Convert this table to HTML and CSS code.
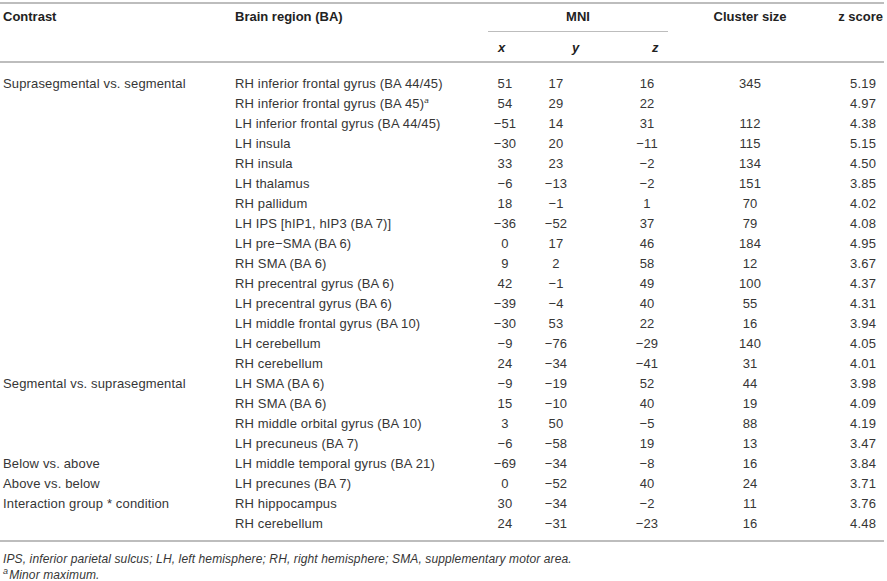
FILE: index.html
```html
<!DOCTYPE html>
<html>
<head>
<meta charset="utf-8">
<link rel="stylesheet" href="styles.css">
</head>
<body>
<div class="wrap">
<table class="tbl">
<colgroup>
<col class="c-con"><col class="c-reg"><col class="c-x"><col class="c-y"><col class="c-z"><col class="c-cl"><col class="c-zs">
</colgroup>
<thead>
<tr class="h1">
<th rowspan="2" class="con">Contrast</th>
<th rowspan="2" class="reg">Brain region (BA)</th>
<th colspan="3" class="mni"><div class="mni-in">MNI</div></th>
<th rowspan="2" class="cl">Cluster size</th>
<th rowspan="2" class="zs">z score</th>
</tr>
<tr class="h2">
<th class="hx">x</th>
<th class="hy">y</th>
<th class="hz">z</th>
</tr>
</thead>
<tbody>
<tr><td class="con">Suprasegmental vs. segmental</td><td class="reg">RH inferior frontal gyrus (BA 44/45)</td><td class="n">51</td><td class="n">17</td><td class="n z">16</td><td class="n">345</td><td class="zs">5.19</td></tr>
<tr><td class="con"></td><td class="reg">RH inferior frontal gyrus (BA 45)<sup>a</sup></td><td class="n">54</td><td class="n">29</td><td class="n z">22</td><td class="n"></td><td class="zs">4.97</td></tr>
<tr><td class="con"></td><td class="reg">LH inferior frontal gyrus (BA 44/45)</td><td class="n">−51</td><td class="n">14</td><td class="n z">31</td><td class="n">112</td><td class="zs">4.38</td></tr>
<tr><td class="con"></td><td class="reg">LH insula</td><td class="n">−30</td><td class="n">20</td><td class="n z">−11</td><td class="n">115</td><td class="zs">5.15</td></tr>
<tr><td class="con"></td><td class="reg">RH insula</td><td class="n">33</td><td class="n">23</td><td class="n z">−2</td><td class="n">134</td><td class="zs">4.50</td></tr>
<tr><td class="con"></td><td class="reg">LH thalamus</td><td class="n">−6</td><td class="n">−13</td><td class="n z">−2</td><td class="n">151</td><td class="zs">3.85</td></tr>
<tr><td class="con"></td><td class="reg">RH pallidum</td><td class="n">18</td><td class="n">−1</td><td class="n z">1</td><td class="n">70</td><td class="zs">4.02</td></tr>
<tr><td class="con"></td><td class="reg">LH IPS [hIP1, hIP3 (BA 7)]</td><td class="n">−36</td><td class="n">−52</td><td class="n z">37</td><td class="n">79</td><td class="zs">4.08</td></tr>
<tr><td class="con"></td><td class="reg">LH pre−SMA (BA 6)</td><td class="n">0</td><td class="n">17</td><td class="n z">46</td><td class="n">184</td><td class="zs">4.95</td></tr>
<tr><td class="con"></td><td class="reg">RH SMA (BA 6)</td><td class="n">9</td><td class="n">2</td><td class="n z">58</td><td class="n">12</td><td class="zs">3.67</td></tr>
<tr><td class="con"></td><td class="reg">RH precentral gyrus (BA 6)</td><td class="n">42</td><td class="n">−1</td><td class="n z">49</td><td class="n">100</td><td class="zs">4.37</td></tr>
<tr><td class="con"></td><td class="reg">LH precentral gyrus (BA 6)</td><td class="n">−39</td><td class="n">−4</td><td class="n z">40</td><td class="n">55</td><td class="zs">4.31</td></tr>
<tr><td class="con"></td><td class="reg">LH middle frontal gyrus (BA 10)</td><td class="n">−30</td><td class="n">53</td><td class="n z">22</td><td class="n">16</td><td class="zs">3.94</td></tr>
<tr><td class="con"></td><td class="reg">LH cerebellum</td><td class="n">−9</td><td class="n">−76</td><td class="n z">−29</td><td class="n">140</td><td class="zs">4.05</td></tr>
<tr><td class="con"></td><td class="reg">RH cerebellum</td><td class="n">24</td><td class="n">−34</td><td class="n z">−41</td><td class="n">31</td><td class="zs">4.01</td></tr>
<tr><td class="con">Segmental vs. suprasegmental</td><td class="reg">LH SMA (BA 6)</td><td class="n">−9</td><td class="n">−19</td><td class="n z">52</td><td class="n">44</td><td class="zs">3.98</td></tr>
<tr><td class="con"></td><td class="reg">RH SMA (BA 6)</td><td class="n">15</td><td class="n">−10</td><td class="n z">40</td><td class="n">19</td><td class="zs">4.09</td></tr>
<tr><td class="con"></td><td class="reg">RH middle orbital gyrus (BA 10)</td><td class="n">3</td><td class="n">50</td><td class="n z">−5</td><td class="n">88</td><td class="zs">4.19</td></tr>
<tr><td class="con"></td><td class="reg">LH precuneus (BA 7)</td><td class="n">−6</td><td class="n">−58</td><td class="n z">19</td><td class="n">13</td><td class="zs">3.47</td></tr>
<tr><td class="con">Below vs. above</td><td class="reg">LH middle temporal gyrus (BA 21)</td><td class="n">−69</td><td class="n">−34</td><td class="n z">−8</td><td class="n">16</td><td class="zs">3.84</td></tr>
<tr><td class="con">Above vs. below</td><td class="reg">LH precunes (BA 7)</td><td class="n">0</td><td class="n">−52</td><td class="n z">40</td><td class="n">24</td><td class="zs">3.71</td></tr>
<tr><td class="con">Interaction group * condition</td><td class="reg">RH hippocampus</td><td class="n">30</td><td class="n">−34</td><td class="n z">−2</td><td class="n">11</td><td class="zs">3.76</td></tr>
<tr><td class="con"></td><td class="reg">RH cerebellum</td><td class="n">24</td><td class="n">−31</td><td class="n z">−23</td><td class="n">16</td><td class="zs">4.48</td></tr>
</tbody>
</table>
<div class="notes">
<p>IPS, inferior parietal sulcus; LH, left hemisphere; RH, right hemisphere; SMA, supplementary motor area.</p>
<p><sup class="fn">a</sup>Minor maximum.</p>
</div>
</div>
</body>
</html>
```
FILE: styles.css
```css
html, body {
  margin: 0;
  padding: 0;
  background: #ffffff;
}
body {
  font-family: "Liberation Sans", Arial, sans-serif;
  color: #363636;
}
.wrap {
  width: 884px;
  padding-top: 2px;
}
.tbl {
  width: 884px;
  table-layout: fixed;
  border-collapse: collapse;
  border-top: 2px solid #bdbdbd;
  font-size: 13px;
  letter-spacing: 0.15px;
}
.c-con { width: 232px; }
.c-reg { width: 248px; }
.c-x { width: 50px; }
.c-y { width: 52px; }
.c-z { width: 122px; }
.c-cl { width: 92px; }
.c-zs { width: 88px; }

.tbl th, .tbl td {
  padding: 0;
  white-space: nowrap;
}
.tbl thead {
  border-bottom: 2px solid #bdbdbd;
}
.tbl th {
  font-weight: bold;
  color: #222222;
  line-height: 16px;
  letter-spacing: 0;
}
.h1 th {
  vertical-align: top;
  padding-top: 5px;
}
.h1 th.mni {
  padding-top: 0;
}
.mni-in {
  margin: 0 36px 0 8px;
  padding: 5px 0 6px;
  border-bottom: 1px solid #bdbdbd;
  text-align: center;
}
.h2 th {
  height: 29px;
  padding-top: 8px;
  padding-bottom: 5px;
  box-sizing: border-box;
  text-align: left;
  font-style: italic;
}
th.con, th.reg { text-align: left; padding-left: 3px; }
th.cl { text-align: center; }
th.zs { text-align: right; padding-right: 1px; }
th.hx { padding-left: 18px; }
th.hy { padding-left: 42px; }
th.hz { padding-left: 70px; }

.tbl td {
  line-height: 20px;
}
tbody tr:first-child td { padding-top: 11px; }
tbody tr:last-child td { padding-bottom: 6px; }
.tbl tbody {
  border-bottom: 2px solid #bdbdbd;
}
td.con, td.reg { padding-left: 3px; }
td.n { text-align: center; }
td.n.z { padding-left: 8px; }
td.zs { text-align: right; padding-right: 8px; }

sup {
  font-size: 8px;
  line-height: 0;
  vertical-align: 5px;
  font-style: italic;
}
sup.fn {
  font-size: 9px;
  margin-right: 1px;
}

.notes {
  padding-top: 9px;
  padding-left: 3px;
  font-size: 12px;
  font-style: italic;
  line-height: 16px;
  letter-spacing: 0.12px;
}
.notes p {
  margin: 0;
}
```
